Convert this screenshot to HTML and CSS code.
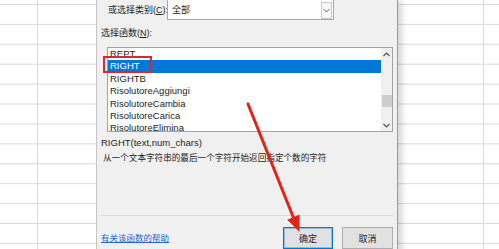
FILE: index.html
```html
<!DOCTYPE html>
<html lang="zh-CN">
<head>
  <meta charset="UTF-8">
  <title>插入函数</title>
  <link rel="stylesheet" href="styles.css">
</head>
<body>
  <div class="dialog">
    <div class="category-row">
      <label class="category-label">或选择类别(<u>C</u>):</label>
      <div class="select">
        <span class="select-value">全部</span>
        <span class="select-btn">
          <svg width="7" height="5" viewBox="0 0 7 5"><polyline points="0.5,1 3.5,4 6.5,1" fill="none" stroke="#666" stroke-width="1"/></svg>
        </span>
      </div>
    </div>

    <div class="list-label">选择函数(<u>N</u>):</div>

    <div class="listbox">
      <ul class="items">
        <li>REPT</li>
        <li class="selected">RIGHT</li>
        <li>RIGHTB</li>
        <li>RisolutoreAggiungi</li>
        <li>RisolutoreCambia</li>
        <li>RisolutoreCarica</li>
        <li>RisolutoreElimina</li>
      </ul>
      <div class="scrollbar">
        <span class="scroll-arrow">
          <svg width="7" height="5" viewBox="0 0 7 5"><polyline points="0.5,4 3.5,1 6.5,4" fill="none" stroke="#555" stroke-width="1.2"/></svg>
        </span>
        <span class="thumb"></span>
        <span class="scroll-arrow down">
          <svg width="7" height="5" viewBox="0 0 7 5"><polyline points="0.5,1 3.5,4 6.5,1" fill="none" stroke="#555" stroke-width="1.2"/></svg>
        </span>
      </div>
      <span class="mark"></span>
    </div>

    <div class="syntax">RIGHT(text,num_chars)</div>
    <div class="summary">从一个文本字符串的最后一个字符开始返回指定个数的字符</div>

    <div class="separator"></div>

    <div class="footer">
      <a class="help" href="#">有关该函数的帮助</a>
      <div class="buttons">
        <button class="btn primary">确定</button>
        <button class="btn">取消</button>
      </div>
    </div>
  </div>

  <svg class="arrow" width="499" height="249" viewBox="0 0 499 249">
    <line x1="248" y1="104" x2="293.4" y2="217.5" stroke="#e2231a" stroke-width="3" stroke-linecap="round"/>
    <polygon points="299.5,232 287.2,219.8 299.6,214.6" fill="#e2231a"/>
  </svg>
</body>
</html>
```

FILE: styles.css
```css
body {
  margin: 0;
  width: 499px;
  height: 249px;
  overflow: hidden;
  position: relative;
  font-family: "Liberation Sans", "Noto Sans CJK SC", sans-serif;
  color: #1e1e1e;
  background-color: #ffffff;
  background-image:
    linear-gradient(to right, transparent 37px, #dadada 37px, #dadada 38px, transparent 38px),
    linear-gradient(to right, transparent 483px, #dadada 483px, #dadada 484px, transparent 484px),
    linear-gradient(#dadada 1px, transparent 1px);
  background-size: 100% 100%, 100% 100%, 100% 19.92px;
  background-position: 0 0, 0 0, 0 4px;
  background-repeat: no-repeat, no-repeat, repeat;
}

/* dialog lies over the sheet */
.dialog {
  position: absolute;
  left: 96px;
  top: 0;
  width: 302px;
  height: 260px;
  box-sizing: border-box;
  padding: 0 4px;
  background: #f0f0f0;
  border-left: 1px solid #c4c4c4;
  border-right: 1px solid #9c9c9c;
  box-shadow: 5px 0 6px -1px rgba(0, 0, 0, 0.16);
}

.category-row {
  display: flex;
  align-items: center;
  height: 21px;
  margin-top: -1px;
}
.category-label {
  flex: none;
  width: 59px;
  margin-left: 7px;
  font-size: 9px;
  white-space: nowrap;
}
.select {
  display: flex;
  align-items: center;
  width: 167px;
  height: 21px;
  box-sizing: border-box;
  background: #fff;
  border: 1px solid #a9a9a9;
}
.select-value {
  font-size: 9px;
  padding-left: 4px;
}
.select-btn {
  display: flex;
  align-items: center;
  justify-content: center;
  margin-left: auto;
  margin-right: 1px;
  width: 11px;
  height: 17px;
  margin-top: 1px;
  box-sizing: border-box;
  border: 1px solid #c8c8c8;
  background: #f6f6f6;
}

.list-label {
  margin-top: 7px;
  font-size: 9px;
  line-height: 13px;
  white-space: nowrap;
}

.listbox {
  position: relative;
  display: flex;
  width: 286px;
  height: 85px;
  box-sizing: border-box;
  margin: 7px 0 0 6px;
  background: #fff;
  border: 1px solid #a3a3a3;
}
.items {
  flex: 1;
  list-style: none;
  margin: 0;
  padding: 0;
  overflow: hidden;
}
.items li {
  height: 12.4px;
  line-height: 12.4px;
  padding-left: 2px;
  font-size: 9.5px;
  white-space: nowrap;
}
.items li.selected {
  background: #0078d7;
  color: #fff;
}
.scrollbar {
  flex: none;
  width: 11px;
  display: flex;
  flex-direction: column;
  align-items: center;
  background: #f0f0f0;
}
.scroll-arrow {
  display: flex;
  align-items: center;
  justify-content: center;
  height: 12px;
  width: 11px;
}
.scroll-arrow.down {
  margin-top: auto;
}
.thumb {
  width: 10px;
  height: 12px;
  margin-top: 35px;
  background: #cdcdcd;
}
.mark {
  position: absolute;
  left: -5px;
  top: 8px;
  width: 49px;
  height: 17px;
  box-sizing: border-box;
  border: 2px solid #e0262b;
}

.syntax {
  margin-top: 5px;
  font-size: 9.5px;
  line-height: 12px;
  white-space: nowrap;
}
.summary {
  margin-top: 3px;
  padding-left: 2px;
  font-size: 8.6px;
  line-height: 12px;
  white-space: nowrap;
}

.separator {
  height: 1px;
  margin-top: 51px;
  background: #dcdcdc;
}

.footer {
  display: flex;
  align-items: center;
  margin-top: 11px;
}
.help {
  font-size: 8.5px;
  color: #2a64c8;
  text-decoration: underline;
  margin-top: -3px;
}
.buttons {
  display: flex;
  gap: 9px;
  margin-left: auto;
}
.btn {
  width: 51px;
  height: 22px;
  padding: 0;
  font-family: "Noto Sans CJK SC", sans-serif;
  font-size: 9px;
  color: #1e1e1e;
  background: #e1e1e1;
  border: 1px solid #adadad;
}
.btn.primary {
  width: 50px;
  border-color: #0078d7;
  box-shadow: inset 0 0 0 1px rgba(0, 120, 215, 0.35);
}

.arrow {
  position: absolute;
  left: 0;
  top: 0;
  pointer-events: none;
}
```
